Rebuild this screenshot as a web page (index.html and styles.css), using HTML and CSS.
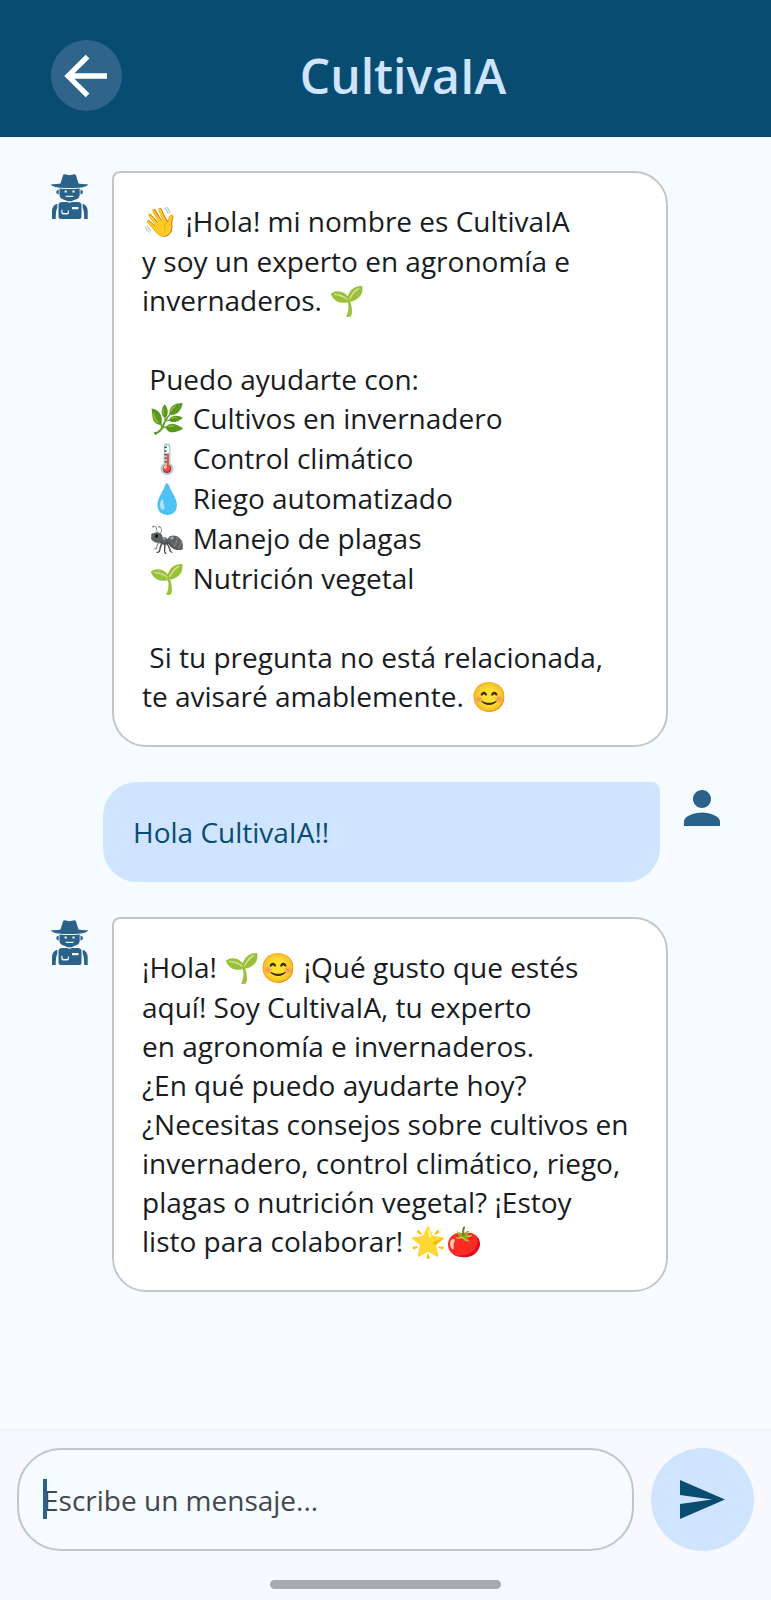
FILE: index.html
```
<!DOCTYPE html>
<html lang="es">
<head>
<meta charset="utf-8">
<meta name="viewport" content="width=device-width, initial-scale=1">
<title>CultivaIA</title>
<link rel="stylesheet" href="styles.css">
</head>
<body>
<svg class="sprite" aria-hidden="true">
  <symbol id="farmer" viewBox="0 0 37 45">
    <path d="M9.500 9.500 L12 1.500 Q12.500 .200 13.500 .200 Q15 .200 16 .800 Q18.500 1.500 21 .800 Q22 .200 23.500 .200 Q24.500 .200 25 1.500 L27.500 9.500 Q31 10.500 37 10.300 Q36 12.800 30 13.500 Q18.500 14.600 7 13.500 Q1 12.800 0 10.300 Q6 10.500 9.500 9.500 Z"/>
    <path fill-rule="evenodd" d="M8.500 14.400 Q18.500 15.500 28.700 14.400 V21 Q28.500 25 23 26 L20.500 27.300 H16.700 L14 26 Q8.700 25 8.500 21 Z M13.600 16.600 V18.600 H15.800 V16.600 Z M21.400 16.600 V18.600 H23.600 V16.600 Z M14.800 21.800 V23 H22.400 V21.800 Z"/>
    <path d="M7.700 15.500 V20.500 Q5.200 20 5.200 18 Q5.200 16 7.700 15.500 Z M29.500 15.500 V20.500 Q32 20 32 18 Q32 16 29.500 15.500 Z"/>
    <path fill-rule="evenodd" d="M11 28 H16 Q18.500 29.500 21 28 H27 Q30.500 28 30.500 31.500 V42.500 Q30.500 45 28 45 H10 Q7.500 45 7.500 42.500 V31.500 Q7.500 28 11 28 Z M21 33 V35.300 H27.500 V33 Z M10.300 35.800 V38.500 Q10.300 40.400 12.300 40.400 H16 Q18 40.400 18 38.500 V36.400 H16.900 V38 Q16.900 39 15.700 39 H12.700 Q11.500 39 11.500 38 V35.800 Z"/>
    <path d="M6.300 29.800 V34 Q4.900 35.500 4.700 45 H1 V37.500 Q1.200 31 6.300 29.800 Z M31.700 29.800 V34 Q33 35.500 33.200 45 H36.700 V37.500 Q36.400 31 31.700 29.800 Z"/>
  </symbol>
</svg>

<header class="topbar">
  <button class="back" type="button" aria-label="Volver">
    <svg viewBox="0.500 0 24 24" aria-hidden="true"><path d="M20 11H7.830l5.590-5.590L12 4l-8 8 8 8 1.410-1.410L7.830 13H20v-2z"/></svg>
  </button>
  <h1 class="title">CultivaIA</h1>
</header>

<main class="chat">
  <article class="row row-bot">
    <svg class="avatar avatar-bot" aria-hidden="true"><use href="#farmer"/></svg>
    <p class="bubble bubble-bot"><span class="emoji">👋</span> ¡Hola! mi nombre es CultivaIA
y soy un experto en agronomía e
invernaderos. <span class="emoji">🌱</span>

 Puedo ayudarte con:
 <span class="emoji">🌿</span> Cultivos en invernadero
 <span class="emoji">🌡️</span> Control climático
 <span class="emoji">💧</span> Riego automatizado
 <span class="emoji">🐜</span> Manejo de plagas
 <span class="emoji">🌱</span> Nutrición vegetal

 Si tu pregunta no está relacionada,
te avisaré amablemente. <span class="emoji">😊</span></p>
  </article>

  <article class="row row-user">
    <p class="bubble bubble-user">Hola CultivaIA!!</p>
    <svg class="avatar avatar-user" viewBox="4 4 16 16" aria-hidden="true"><path d="M12 12c2.210 0 4-1.790 4-4s-1.790-4-4-4-4 1.790-4 4 1.790 4 4 4zm0 2c-2.670 0-8 1.340-8 4v2h16v-2c0-2.660-5.330-4-8-4z"/></svg>
  </article>

  <article class="row row-bot">
    <svg class="avatar avatar-bot" aria-hidden="true"><use href="#farmer"/></svg>
    <p class="bubble bubble-bot">¡Hola! <span class="emoji">🌱😊</span> ¡Qué gusto que estés
aquí! Soy CultivaIA, tu experto
en agronomía e invernaderos.
¿En qué puedo ayudarte hoy?
¿Necesitas consejos sobre cultivos en
invernadero, control climático, riego,
plagas o nutrición vegetal? ¡Estoy
listo para colaborar! <span class="emoji">🌟🍅</span></p>
  </article>
</main>

<footer class="composer">
  <form class="form">
    <div class="field">
      <input class="input" type="text" placeholder="Escribe un mensaje..." aria-label="Escribe un mensaje">
      <span class="caret"></span>
    </div>
    <button class="send" type="button" aria-label="Enviar">
      <svg viewBox="0 0 45 39" aria-hidden="true"><path d="M0 0 45 19.500 0 39V24L32 19.500 0 15Z"/></svg>
    </button>
  </form>
  <div class="handle"></div>
</footer>
</body>
</html>
```
FILE: styles.css
```
* {
  box-sizing: border-box;
}

body {
  margin: 0;
  min-height: 100vh;
  display: flex;
  flex-direction: column;
  background: #f6fbff;
  color: #191c1f;
  font-family: "Open Sans", "Noto Sans", sans-serif;
  font-size: 28px;
  line-height: 39px;
}

.sprite {
  position: absolute;
  width: 0;
  height: 0;
}

.topbar {
  display: flex;
  align-items: center;
  padding: 40px 87px 26px 51px;
  background: #094c72;
}

.back {
  display: grid;
  place-items: center;
  flex: none;
  width: 71px;
  height: 71px;
  padding: 0;
  border: 0;
  border-radius: 50%;
  background: #2f658b;
}

.back svg {
  width: 64px;
  height: 64px;
  fill: #fff;
}

.title {
  flex: 1;
  margin: 0;
  color: #cfe5ff;
  font-size: 48px;
  font-weight: 600;
  line-height: 68px;
  text-align: center;
}

.chat {
  flex: 1;
  display: flex;
  flex-direction: column;
  gap: 35px;
  padding: 34px 51px;
}

.row {
  display: flex;
  align-items: flex-start;
  gap: 24px;
}

.row-bot {
  padding-right: 52px;
}

.row-user {
  padding-left: 52px;
}

.avatar {
  flex: none;
  fill: #2b628a;
}

.avatar-bot {
  width: 37px;
  height: 45px;
  margin-top: 3px;
}

.avatar-user {
  width: 36px;
  height: 36px;
  margin-top: 8px;
}

.bubble {
  flex: 1;
  min-width: 0;
  margin: 0;
  padding: 29px 28px 28px;
  border: 2px solid transparent;
  white-space: pre-wrap;
}

.bubble-bot {
  border-color: #c0c7cb;
  border-radius: 8px 34px 34px 34px;
  background: #fff;
}

.bubble-user {
  border-radius: 34px 8px 34px 34px;
  background: #cfe4ff;
  color: #094c72;
}

.emoji {
  font-family: "Noto Color Emoji", sans-serif;
  font-size: 29px;
}

.composer {
  padding: 17px 17px 11px;
  border-top: 2px solid #f0f3f8;
  background: #f8f9ff;
}

.form {
  display: flex;
  gap: 17px;
}

.field {
  position: relative;
  flex: 1;
}

.input {
  width: 100%;
  height: 103px;
  padding: 0 24px;
  border: 2px solid #c0c7cb;
  border-radius: 44px;
  background: #f6fbff;
  color: inherit;
  font: inherit;
  outline: 0;
}

.input::placeholder {
  color: #42474c;
  opacity: 1;
}

.caret {
  position: absolute;
  top: 31px;
  left: 26px;
  width: 4px;
  height: 40px;
  background: #2b628a;
}

.send {
  display: grid;
  place-items: center;
  flex: none;
  width: 103px;
  height: 103px;
  padding: 0;
  border: 0;
  border-radius: 50%;
  background: #cfe4ff;
}

.send svg {
  width: 45px;
  height: 39px;
  fill: #094c72;
}

.handle {
  width: 231px;
  height: 9px;
  margin: 29px auto 0;
  border-radius: 5px;
  background: #a9aab0;
}
```
